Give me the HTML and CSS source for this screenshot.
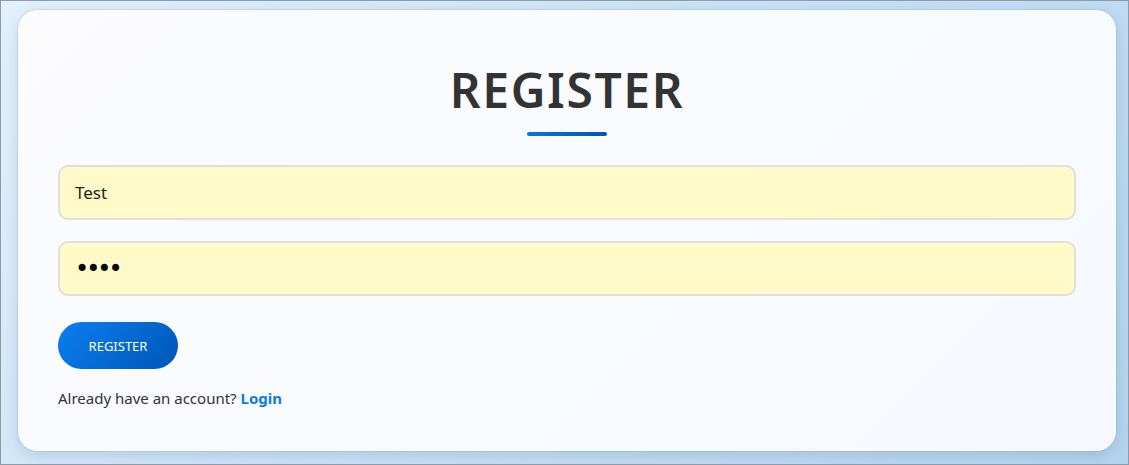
FILE: index.html
```html
<!DOCTYPE html>
<html>
<head>
  <meta name="viewport" content="width=device-width, initial-scale=1.0">
  <title>Register</title>
  <link rel="stylesheet" href="styles.css">
</head>
<body>
  <div class="card">
    <div class="heading">REGISTER</div>
    <div class="underline"></div>

    <form class="form" onsubmit="return false">
      <input class="field" type="text" name="username" value="Test">
      <input class="field" type="password" name="password" value="test">
      <button class="btn" type="submit">REGISTER</button>
    </form>

    <p class="switch">Already have an account? <a href="#">Login</a></p>
  </div>
</body>
</html>
```

FILE: styles.css
```css
html {
  height: 100%;
}
body {
  margin: 0;
  height: 100%;
  box-sizing: border-box;
  border: 1px solid #8c9cab;
  padding: 9px 12px 13px 17px;
  background: linear-gradient(135deg, #e2f1fc 0%, #c9e1f5 50%, #b3d3ee 100%);
  font-family: "Noto Sans", sans-serif;
  color: #333;
}
.card {
  height: 100%;
  box-sizing: border-box;
  padding: 52px 40px 40px 40px;
  border-radius: 20px;
  background: linear-gradient(135deg, #fcfcfe 0%, #f5f9fe 100%);
  box-shadow: 0 0 0 1px rgba(120, 140, 160, 0.15), 0 4px 14px rgba(40, 80, 120, 0.18);
}
.heading {
  text-align: center;
  font-size: 48px;
  font-weight: 600;
  letter-spacing: 1.6px;
  line-height: 56px;
  color: #333;
}
.underline {
  width: 80px;
  height: 4px;
  margin: 14px auto 29px auto;
  border-radius: 2px;
  background: linear-gradient(90deg, #0a74e0, #0055b3);
}
.form {
  display: flex;
  flex-direction: column;
  align-items: flex-start;
  gap: 21px;
}
.field {
  width: 100%;
  height: 55px;
  box-sizing: border-box;
  padding: 0 15px;
  border: 2px solid #dfdfdf;
  border-radius: 10px;
  background: #fffac8;
  font-family: inherit;
  font-size: 17px;
  color: #222;
  outline: none;
}
.field[type=password] {
  font-family: "DejaVu Sans", sans-serif;
  font-size: 24px;
  letter-spacing: -3px;
  color: #000;
}
.btn {
  margin-top: 5px;
  width: 120px;
  height: 47px;
  border: none;
  border-radius: 24px;
  background: linear-gradient(135deg, #0a7ff2, #0056b5);
  color: #fff;
  font-family: inherit;
  font-size: 13px;
  cursor: pointer;
}
.switch {
  margin: 19px 0 0 0;
  font-size: 15px;
  color: #333;
}
.switch a {
  color: #0a7ae6;
  font-weight: bold;
  text-decoration: none;
}
```
